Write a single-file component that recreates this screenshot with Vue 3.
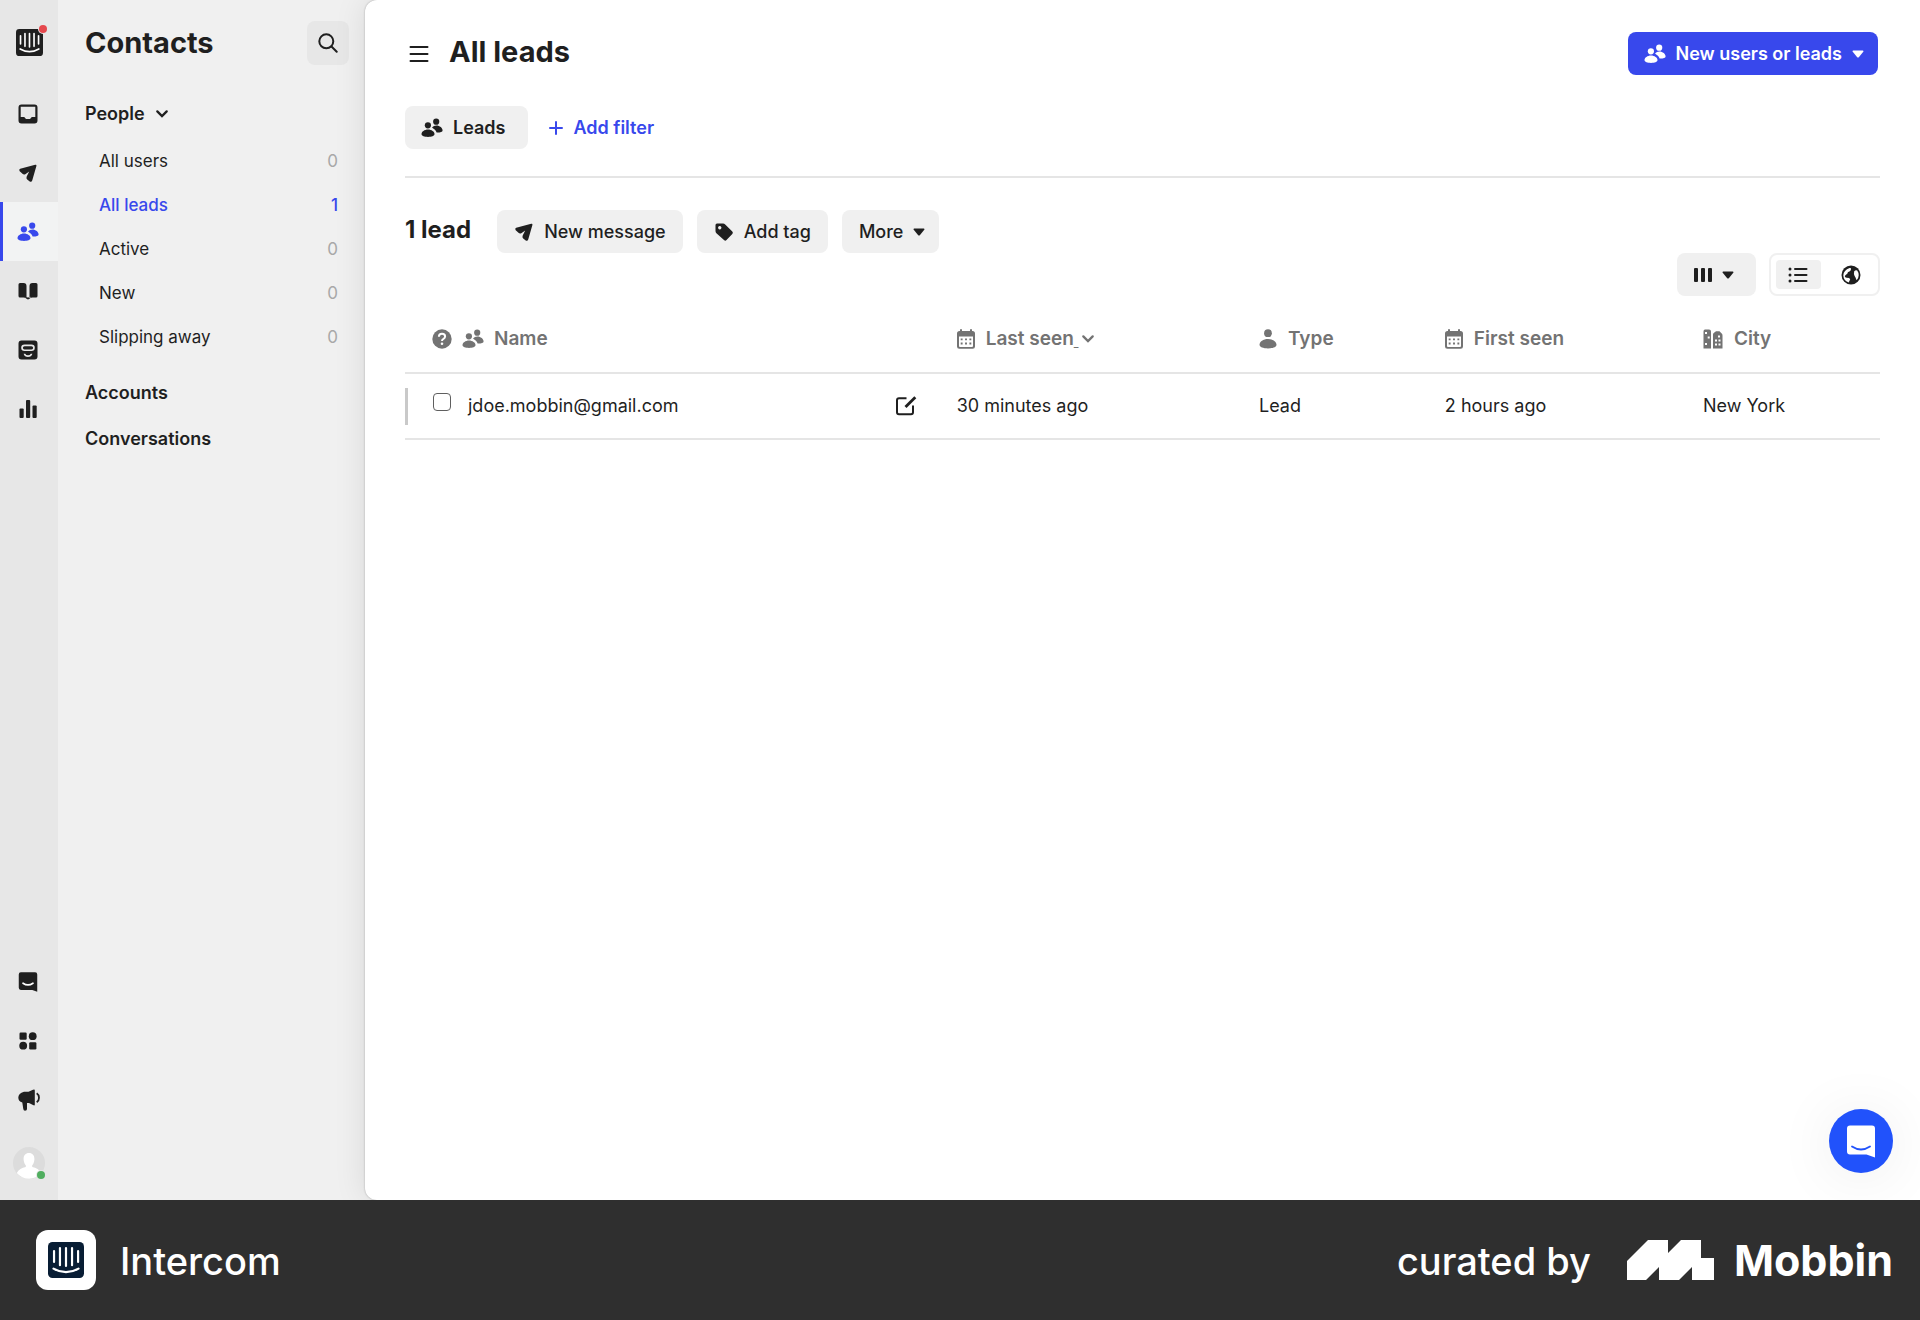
<script setup>
const segments = [
  { name: 'All users', count: 0 },
  { name: 'All leads', count: 1, active: true },
  { name: 'Active', count: 0 },
  { name: 'New', count: 0 },
  { name: 'Slipping away', count: 0 },
]

const railTop = [
  { id: 'inbox', label: 'Inbox' },
  { id: 'plane', label: 'Outbound' },
  { id: 'people', label: 'Contacts', active: true },
  { id: 'book', label: 'Articles' },
  { id: 'bot', label: 'Operator' },
  { id: 'chart', label: 'Reports' },
]

const railBottom = [
  { id: 'chat', label: 'Messenger' },
  { id: 'apps', label: 'App store' },
  { id: 'horn', label: 'News' },
]

const leads = [
  { email: 'jdoe.mobbin@gmail.com', lastSeen: '30 minutes ago', type: 'Lead', firstSeen: '2 hours ago', city: 'New York' },
]
</script>

<template>
  <div class="app">
    <svg class="sprite" aria-hidden="true">
      <symbol id="people" viewBox="0 0 22 20">
        <circle cx="6.9" cy="7.3" r="3.1" /><circle cx="15.2" cy="3.7" r="3.1" />
        <path d="M.5 16C.5 13.6 3.5 11.4 7 11.4s6.5 2.2 6.5 4.6c0 1.9-3 2.9-6.5 2.9S.5 17.9.5 16z" />
        <path d="M11 9.6c1.200-1.300 2.700-2 4.400-2 3.300 0 6.200 2.700 6.200 4.800 0 1.500-3 2.200-6 2-.7-1.900-2.200-3.200-4.600-4.800z" />
      </symbol>
      <symbol id="plane" viewBox="0 0 20 20">
        <path d="M2.200 5.800 17.200 1.800Q18.800 1.500 18.400 3.100L14.300 17.300Q13.500 19.600 11.700 18.400L9.200 16.400Q7.900 15.200 8.700 13.400L11.200 8.600 7.300 11.200Q5.700 12 4.500 10.800L1.700 8.200Q.4 6.600 2.200 5.800z" />
      </symbol>
      <symbol id="inbox" viewBox="0 0 20 20">
        <path fill-rule="evenodd" d="M3.500.5h13a3 3 0 0 1 3 3v13a3 3 0 0 1-3 3h-13a3 3 0 0 1-3-3v-13a3 3 0 0 1 3-3zM2.700 2.700V13h3.500l1.800 2h4l1.800-2h3.500V2.700z" />
      </symbol>
      <symbol id="book" viewBox="0 0 20 20">
        <path d="M.5 3.500Q.5 2 2 2h3.500Q8.500 2 8.500 5v12L5.500 16.500H2Q.5 16.500.5 15zM19.500 3.500Q19.500 2 18 2h-3.500Q11.500 2 11.500 5v12l3-.5H18q1.500 0 1.500-1.500zM7.500 15.800Q10 17 12.500 15.800L12.200 17.300Q10 19.500 7.800 17.300z" />
      </symbol>
      <symbol id="bot" viewBox="0 0 20 20">
        <path fill-rule="evenodd" d="M3.500.5h13a3 3 0 0 1 3 3v13a3 3 0 0 1-3 3h-13a3 3 0 0 1-3-3v-13a3 3 0 0 1 3-3zM6.500 4.500a3.300 3.300 0 0 0 0 6.600h7a3.300 3.300 0 0 0 0-6.600zM6.500 6.200h7a1.600 1.600 0 0 1 0 3.200h-7a1.600 1.600 0 0 1 0-3.200zM5.600 13.700q1 3.200 4.400 3.200t4.400-3.200h-1.600q-.8 1.500-2.800 1.500t-2.800-1.500z" />
      </symbol>
      <symbol id="chart" viewBox="0 0 20 20">
        <rect x="1.500" y="9.500" width="4.200" height="9.500" rx="1" /><rect x="8" y="1" width="4.200" height="18" rx="1" /><rect x="14.500" y="6.500" width="4.200" height="12.500" rx="1" />
      </symbol>
      <symbol id="chat" viewBox="0 0 20 21">
        <path d="M2.500.3h15a2.200 2.200 0 0 1 2.200 2.200v18.300l-5.200-2H2.500A2.200 2.200 0 0 1 .3 16.600V2.500A2.200 2.200 0 0 1 2.500.3z" />
        <path class="smile" d="M4.800 11.800q5.200 3.600 10.400 0" />
      </symbol>
      <symbol id="apps" viewBox="0 0 20 20">
        <rect x="1.500" y="1.500" width="7.200" height="7.200" rx="1.200" /><circle cx="14.700" cy="5.200" r="3.900" /><circle cx="5.200" cy="14.700" r="3.900" /><rect x="11.200" y="11.200" width="7.200" height="7.200" rx="1.200" />
      </symbol>
      <symbol id="horn" viewBox="0 0 22 22">
        <path d="M6 2.800h4.500L15 .8Q16.800-.2 16.800 1.500v14q0 1.500-1.800.6L11 14H9v6q0 1.700-2 1.700-1.500 0-1.700-1.700L4.300 13.600Q.3 12.600.3 8.600T6 2.800z" />
        <path d="M18.700 4.200q2.300 1.500 2.300 4.500t-2.300 4.500" fill="none" stroke="currentColor" stroke-width="1.800" />
      </symbol>
      <symbol id="calendar" viewBox="0 0 18 20">
        <path fill-rule="evenodd" d="M3 .3h2V2h8V.3h2V2h.5A2.500 2.500 0 0 1 18 4.500v13a2.300 2.300 0 0 1-2.300 2.300H2.300A2.300 2.300 0 0 1 0 17.500v-13A2.500 2.500 0 0 1 2.500 2H3zM2 7.500V17q0 1 1 1h12q1 0 1-1V7.500z" />
        <path d="M3.700 9.400h1.900v1.900H3.700zM8.050 9.400h1.900v1.900h-1.900zM12.400 9.400h1.900v1.900h-1.900zM3.700 13.600h1.900v1.900H3.700zM8.050 13.600h1.900v1.900h-1.900zM12.400 13.600h1.900v1.900h-1.900z" />
      </symbol>
      <symbol id="person" viewBox="0 0 18 20">
        <circle cx="9" cy="4.200" r="3.900" /><path d="M.5 15.800C.5 12.600 4.300 10 9 10s8.500 2.600 8.500 5.800c0 2.400-3.800 3.600-8.500 3.600S.5 18.200.5 15.800z" />
      </symbol>
      <symbol id="city" viewBox="0 0 20 20">
        <path fill-rule="evenodd" d="M2 .5h4Q8 .5 8 2.500v17H.5V2.500Q.5.500 2 .5zM2 3v2h2V3zM4.700 7.500v2h2v-2zM2 14v2h2v-2z" />
        <path fill-rule="evenodd" d="M10 5.500Q10 4.500 11 3.800L13 2.300h3.500l2.200 2.200Q19.500 5.200 19.500 6.500v13H10zM15 6.500v2h2v-2zM12 10.500v2h2v-2zM15.500 10.500v2h2v-2zM12 14.500v2h2v-2zM15.500 14.500v2h2v-2z" />
      </symbol>
      <symbol id="tag" viewBox="0 0 20 20">
        <path fill-rule="evenodd" d="M3 1.500h6q1.300 0 2.200.9L18.300 9.500q1.200 1.300 0 2.500l-5.800 6.100q-1.200 1.100-2.500 0L2.400 11.200Q1.500 10.300 1.500 9V3Q1.500 1.500 3 1.500zM5.700 4a1.700 1.700 0 1 0 .1 0z" />
      </symbol>
      <symbol id="caret" viewBox="0 0 12 8">
        <path d="M1.200.5h9.600q1.200.2.500 1.200L7 7q-1 1-2 0L.7 1.700Q0 .7 1.200.5z" />
      </symbol>
      <symbol id="chevron" viewBox="0 0 14 10">
        <path d="m2.300 2.400 4.700 4.700 4.700-4.700" fill="none" stroke="currentColor" stroke-width="2.300" stroke-linecap="round" />
      </symbol>
      <symbol id="intercom" viewBox="0 0 28 28">
        <rect width="28" height="28" rx="3.500" />
        <path class="bars" d="M4.700 7v8.500M9.300 4.700v13.300M14 4.700v13.900M18.700 4.700v13.300M23.400 7v8.500M4.300 20.700q9.700 5.600 19.400 0" />
      </symbol>
    </svg>

    <div class="workspace">
      <nav class="rail" aria-label="Primary">
        <a href="#" class="rail-brand" aria-label="Home">
          <svg class="brand-icon"><use href="#intercom" /></svg>
          <span class="dot red"></span>
        </a>
        <a v-for="item in railTop" :key="item.id" href="#" class="rail-item" :class="{ active: item.active }" :aria-label="item.label">
          <svg :class="item.id === 'people' ? 'icon-wide' : 'icon'"><use :href="'#' + item.id" /></svg>
        </a>
        <div class="rail-spacer"></div>
        <a v-for="item in railBottom" :key="item.id" href="#" class="rail-item" :aria-label="item.label">
          <svg :class="item.id === 'horn' ? 'icon-horn' : 'icon'"><use :href="'#' + item.id" /></svg>
        </a>
        <a href="#" class="avatar" aria-label="Profile">
          <svg viewBox="0 0 32 32" width="32" height="32">
            <circle cx="16" cy="16" r="16" fill="#dcdcdc" />
            <path d="M16 6c3.700 0 5.600 2.700 5.400 6.500-.2 3.100-1.300 4.800-2.200 5.800v1.800c4 .8 7.300 2.600 9 6A16 16 0 0 1 3.800 26c1.700-3.300 5-5.100 9-5.900v-1.800c-.9-1-2-2.700-2.200-5.800C10.400 8.700 12.300 6 16 6z" fill="#fff" />
          </svg>
          <span class="dot green"></span>
        </a>
      </nav>

      <aside class="sidebar">
        <header class="sidebar-head">
          <h1>Contacts</h1>
          <button class="search" aria-label="Search">
            <svg class="line" width="20" height="20" viewBox="0 0 20 20"><circle cx="8.300" cy="8.300" r="7" /><path d="m13.500 13.500 5.200 5.200" /></svg>
          </button>
        </header>
        <button class="group">People <svg class="chevron"><use href="#chevron" /></svg></button>
        <ul class="segments">
          <li v-for="s in segments" :key="s.name">
            <a href="#" :class="{ active: s.active }"><span>{{ s.name }}</span><span class="count">{{ s.count }}</span></a>
          </li>
        </ul>
        <a href="#" class="section">Accounts</a>
        <a href="#" class="section">Conversations</a>
      </aside>

      <main class="main">
        <header class="page-head">
          <button class="menu" aria-label="Toggle sidebar">
            <svg class="line" width="20" height="18" viewBox="0 0 20 18"><path d="M1.500 2h17M1.500 9h17M1.500 16h17" /></svg>
          </button>
          <h2>All leads</h2>
          <button class="btn primary"><svg class="icon-wide"><use href="#people" /></svg>New users or leads<svg class="caret"><use href="#caret" /></svg></button>
        </header>

        <div class="filters">
          <button class="btn"><svg class="icon-wide"><use href="#people" /></svg>Leads</button>
          <button class="add-filter">
            <svg class="line" width="14" height="14" viewBox="0 0 14 14"><path d="M7 1v12M1 7h12" /></svg>
            Add filter
          </button>
        </div>

        <div class="actions">
          <h3>1 lead</h3>
          <button class="btn"><svg class="icon"><use href="#plane" /></svg>New message</button>
          <button class="btn"><svg class="icon"><use href="#tag" /></svg>Add tag</button>
          <button class="btn more">More<svg class="caret"><use href="#caret" /></svg></button>
        </div>

        <div class="views">
          <button class="btn columns" aria-label="Columns">
            <svg width="18" height="14" viewBox="0 0 18 14"><rect width="4" height="14" rx="1" /><rect x="7" width="4" height="14" rx="1" /><rect x="14" width="4" height="14" rx="1" /></svg>
            <svg class="caret"><use href="#caret" /></svg>
          </button>
          <div class="toggle">
            <button class="on" aria-label="List view">
              <svg width="20" height="16" viewBox="0 0 20 16"><circle cx="2" cy="2" r="1.500" /><circle cx="2" cy="8" r="1.500" /><circle cx="2" cy="14" r="1.500" /><path d="M7 2h11.500M7 8h11.500M7 14h11.500" stroke="currentColor" stroke-width="2" stroke-linecap="round" /></svg>
            </button>
            <button aria-label="Map view">
              <svg width="20" height="20" viewBox="0 0 20 20"><circle cx="10" cy="10" r="9.500" /><path d="M8.600 3.100Q9.600 2.600 10 3.500q.2 1.100-.6 2.200L8 6.800l-1 .3-.7 1.700-2 1.500-.5 1.700 1.800.8 2.600.2 1 1.500-1 1.700-.2 1.200Q2.600 16 2.300 10.400 2.600 5.200 8.600 3.100zM13.200 6.200q1.600-1.600 3-.6 1.600 2.200 1.500 4.600-.2 3.200-1.900 4.900-1.100-.6-1-2.200l-1.200-1.800q-1.100-2.600-.4-4.900z" fill="#fff" /></svg>
            </button>
          </div>
        </div>

        <table>
          <colgroup><col class="c-name" /><col class="c-last" /><col class="c-type" /><col class="c-first" /><col class="c-city" /></colgroup>
          <thead>
            <tr>
              <th scope="col">
                <div class="cell name">
                  <svg width="20" height="20" viewBox="0 0 20 20"><circle cx="10" cy="10" r="9.700" /><path d="M6.900 7.800q0-3 3.100-3t3.100 2.700q0 1.500-1.600 2.300-1.500.7-1.500 2.200" fill="none" stroke="#fff" stroke-width="2" /><circle cx="10" cy="14.800" r="1.300" fill="#fff" /></svg>
                  <svg class="icon-wide"><use href="#people" /></svg><span>Name</span>
                </div>
              </th>
              <th scope="col"><div class="cell"><svg class="icon-tall"><use href="#calendar" /></svg><button class="sort"><span>Last seen<small>_</small></span><svg class="chevron"><use href="#chevron" /></svg></button></div></th>
              <th scope="col"><div class="cell"><svg class="icon-tall"><use href="#person" /></svg>Type</div></th>
              <th scope="col"><div class="cell"><svg class="icon-tall"><use href="#calendar" /></svg>First seen</div></th>
              <th scope="col"><div class="cell"><svg class="icon"><use href="#city" /></svg>City</div></th>
            </tr>
          </thead>
          <tbody>
            <tr v-for="lead in leads" :key="lead.email">
              <td>
                <div class="lead">
                  <input :id="lead.email" type="checkbox" />
                  <label :for="lead.email">{{ lead.email }}</label>
                  <button class="edit" aria-label="Edit">
                    <svg class="outline" width="22" height="20" viewBox="0 0 22 20"><path d="M11.500 2.200H4Q2 2.200 2 4.200v12q0 2 2 2h12q2 0 2-2V9.500" /><path d="M20.300 1.200 10.500 11" stroke-width="2.800" /></svg>
                  </button>
                </div>
              </td>
              <td>{{ lead.lastSeen }}</td>
              <td>{{ lead.type }}</td>
              <td>{{ lead.firstSeen }}</td>
              <td>{{ lead.city }}</td>
            </tr>
          </tbody>
        </table>
      </main>

      <button class="launcher" aria-label="Open messenger">
        <svg width="30" height="33" viewBox="0 0 30 33"><path d="M4 .5h22a3 3 0 0 1 3 3v29L20.500 29.500H4a3 3 0 0 1-3-3v-23a3 3 0 0 1 3-3z" fill="#fff" /><path d="M6 21.500q9 6 18 0" fill="none" stroke="#2152fb" stroke-width="1.800" stroke-linecap="round" /></svg>
      </button>
    </div>

    <footer class="credit">
      <span class="app-badge"><svg class="badge-icon"><use href="#intercom" /></svg></span>
      <span class="app-name">Intercom</span>
      <span class="curated">curated by</span>
      <svg width="87" height="40" viewBox="0 0 87 40"><path d="M0 21 21 0h20v13L54 0h20v18h13v22H65V27L52 40H32V27L19 40H0z" fill="#fff" /></svg>
      <span class="mobbin">Mobbin</span>
    </footer>
  </div>
</template>

<style>
body {
  margin: 0;
}
</style>

<style scoped>
.app {
  min-height: 100vh;
  display: flex;
  flex-direction: column;
  color: #1f1f1f;
  font-family: Inter, "Liberation Sans", sans-serif;
  font-size: 18px;
  line-height: 24px;
}
.sprite {
  display: none;
}
svg {
  flex: none;
  fill: currentColor;
}
.line,
.outline {
  fill: none;
  stroke: currentColor;
  stroke-width: 2;
}
.line {
  stroke-linecap: round;
}
button {
  padding: 0;
  border: 0;
  background: none;
  color: inherit;
  font: inherit;
}
a {
  color: inherit;
  text-decoration: none;
}
h1, h2, h3 {
  margin: 0;
  font-weight: 700;
}
h1, h2 {
  font-size: 29px;
  line-height: 36px;
}
.icon {
  width: 20px;
  height: 20px;
}
.icon-wide {
  width: 22px;
  height: 20px;
}
.icon-horn {
  width: 22px;
  height: 22px;
}
.icon-tall {
  width: 18px;
  height: 20px;
}
.caret {
  width: 12px;
  height: 8px;
}
.chevron {
  width: 14px;
  height: 10px;
}
.workspace {
  position: relative;
  flex: 1;
  display: flex;
  overflow: hidden;
  background: #f0f0f0;
}

.rail {
  width: 58px;
  display: flex;
  flex-direction: column;
  background: #e7e7e7;
}
.rail-brand {
  position: relative;
  height: 56px;
  padding: 29px 0 0 16px;
  box-sizing: border-box;
  margin-bottom: 28px;
}
.brand-icon {
  width: 27px;
  height: 27px;
  color: #1f1f1f;
}
.bars {
  fill: none;
  stroke: #fff;
  stroke-width: 1.7;
  stroke-linecap: round;
}
.smile {
  fill: none;
  stroke: #fff;
  stroke-width: 1.8;
  stroke-linecap: round;
}
.dot {
  position: absolute;
  width: 8px;
  height: 8px;
  border-radius: 50%;
}
.red {
  top: 25px;
  right: 11px;
  background: #e5484d;
  box-shadow: 0 0 0 1px #e7e7e7;
}
.green {
  right: 0;
  bottom: 0;
  background: #50ae5f;
  box-shadow: 0 0 0 1px #e7e7e7;
}
.rail-item {
  height: 59px;
  display: flex;
  align-items: center;
  padding-left: 18px;
}
.rail-item.active {
  padding-left: 14px;
  border-left: 3px solid #3848ec;
  background: #f2f3f3;
  color: #3848ec;
}
.rail-spacer {
  flex: 1;
}
.avatar {
  position: relative;
  display: flex;
  width: 32px;
  margin: 18px 0 21px 13px;
}

.sidebar {
  width: 307px;
  box-sizing: border-box;
  padding: 21px 16px 0 27px;
}
.sidebar-head {
  display: flex;
  align-items: flex-start;
  justify-content: space-between;
}
.sidebar-head h1 {
  line-height: 43px;
}
.search {
  width: 42px;
  height: 44px;
  display: flex;
  align-items: center;
  justify-content: center;
  border-radius: 8px;
  background: #e7e7e7;
}
.group {
  display: flex;
  align-items: center;
  gap: 10px;
  margin: 37px 0 13px;
  font-weight: 600;
}
.segments {
  margin: 0 0 11px;
  padding: 0;
  list-style: none;
  font-size: 17px;
}
.segments a {
  height: 44px;
  display: flex;
  align-items: center;
  justify-content: space-between;
  padding: 0 11px 0 14px;
}
.segments .active,
.segments .active .count {
  color: #3848ec;
  font-weight: 500;
}
.count {
  color: #a8a8a8;
}
.section {
  display: block;
  line-height: 46px;
  font-weight: 600;
}

.main {
  flex: 1;
  min-width: 0;
  padding: 32px 40px 0;
  border-radius: 12px 0 0 12px;
  background: #fff;
  box-shadow: 0 0 2px rgba(0, 0, 0, 0.3), 0 0 32px rgba(0, 0, 0, 0.1);
}
.page-head {
  display: flex;
  align-items: center;
  margin-right: 2px;
}
.page-head h2 {
  padding-bottom: 3px;
}
.menu {
  display: flex;
  margin: 0 20px 0 4px;
}
.page-head .btn {
  margin-left: auto;
}
.btn {
  height: 43px;
  display: flex;
  align-items: center;
  gap: 10px;
  padding: 0 17px;
  border-radius: 8px;
  background: #f0f0f0;
  font-weight: 500;
  white-space: nowrap;
}
.primary {
  padding: 0 14px 0 16px;
  background: #3848ec;
  color: #fff;
  font-weight: 600;
}
.filters {
  display: flex;
  align-items: center;
  margin-top: 31px;
  padding-bottom: 27px;
  border-bottom: 2px solid #e5e5e5;
}
.filters .btn {
  padding: 0 23px 0 16px;
  font-weight: 600;
}
.add-filter {
  display: flex;
  align-items: center;
  gap: 10px;
  margin-left: 21px;
  color: #3848ec;
  font-weight: 600;
}
.actions {
  display: flex;
  align-items: center;
  gap: 14px;
  margin-top: 32px;
}
.actions h3 {
  margin-right: 12px;
  padding-bottom: 4px;
  font-size: 24px;
}
.more {
  padding-right: 14px;
}
.views {
  display: flex;
  justify-content: flex-end;
  gap: 13px;
}
.columns {
  width: 79px;
}
.toggle {
  width: 111px;
  box-sizing: border-box;
  display: flex;
  gap: 8px;
  padding: 5px;
  border: 2px solid #f0f0f0;
  border-radius: 8px;
}
.toggle button {
  flex: 1;
  display: flex;
  align-items: center;
  justify-content: center;
  border-radius: 4px;
}
.toggle .on {
  background: #f0f0f0;
}

table {
  width: 100%;
  table-layout: fixed;
  border-collapse: collapse;
}
.c-name {
  width: 37.4%;
}
.c-last {
  width: 20.5%;
}
.c-type {
  width: 12.6%;
}
.c-first {
  width: 17.5%;
}
th,
td {
  padding: 0;
  border-bottom: 2px solid #e5e5e5;
  text-align: left;
  white-space: nowrap;
}
th {
  height: 67px;
  padding-top: 9px;
  color: #737373;
  font-size: 19px;
  font-weight: 600;
}
td {
  height: 64px;
}
.cell {
  display: flex;
  align-items: center;
  gap: 11px;
}
.name {
  gap: 10px;
  padding-left: 27px;
}
.sort {
  display: flex;
  align-items: center;
}
.sort small {
  font-size: 10px;
  line-height: 10px;
  vertical-align: -2px;
}
.sort .chevron {
  margin-left: 3px;
}
.lead {
  height: 37px;
  display: flex;
  align-items: center;
  padding: 0 40px 0 25px;
  border-left: 3px solid #c9c9c9;
}
.lead input {
  appearance: none;
  width: 18px;
  height: 18px;
  margin: 0 17px 8px 0;
  border: 1px solid #5f5f5f;
  border-radius: 4px;
}
.edit {
  display: flex;
  margin-left: auto;
}

.launcher {
  position: absolute;
  right: 27px;
  bottom: 27px;
  width: 64px;
  height: 64px;
  display: flex;
  align-items: center;
  justify-content: center;
  border-radius: 50%;
  background: #2152fb;
  box-shadow: 0 4px 60px rgba(0, 0, 0, 0.08);
}

.credit {
  height: 120px;
  box-sizing: border-box;
  display: flex;
  align-items: center;
  padding: 0 27px 0 36px;
  background: #2f2f2f;
  color: #fff;
  font-size: 38px;
  line-height: 48px;
  font-weight: 500;
}
.app-badge {
  width: 60px;
  height: 60px;
  display: flex;
  align-items: center;
  justify-content: center;
  border-radius: 12px;
  background: #fff;
  color: #081d34;
}
.badge-icon {
  width: 36px;
  height: 36px;
}
.app-name,
.curated {
  padding-top: 2px;
}
.app-name {
  margin-left: 24px;
}
.curated {
  margin: 0 36px 0 auto;
}
.mobbin {
  margin-left: 20px;
  font-size: 43px;
  font-weight: 700;
}
</style>
